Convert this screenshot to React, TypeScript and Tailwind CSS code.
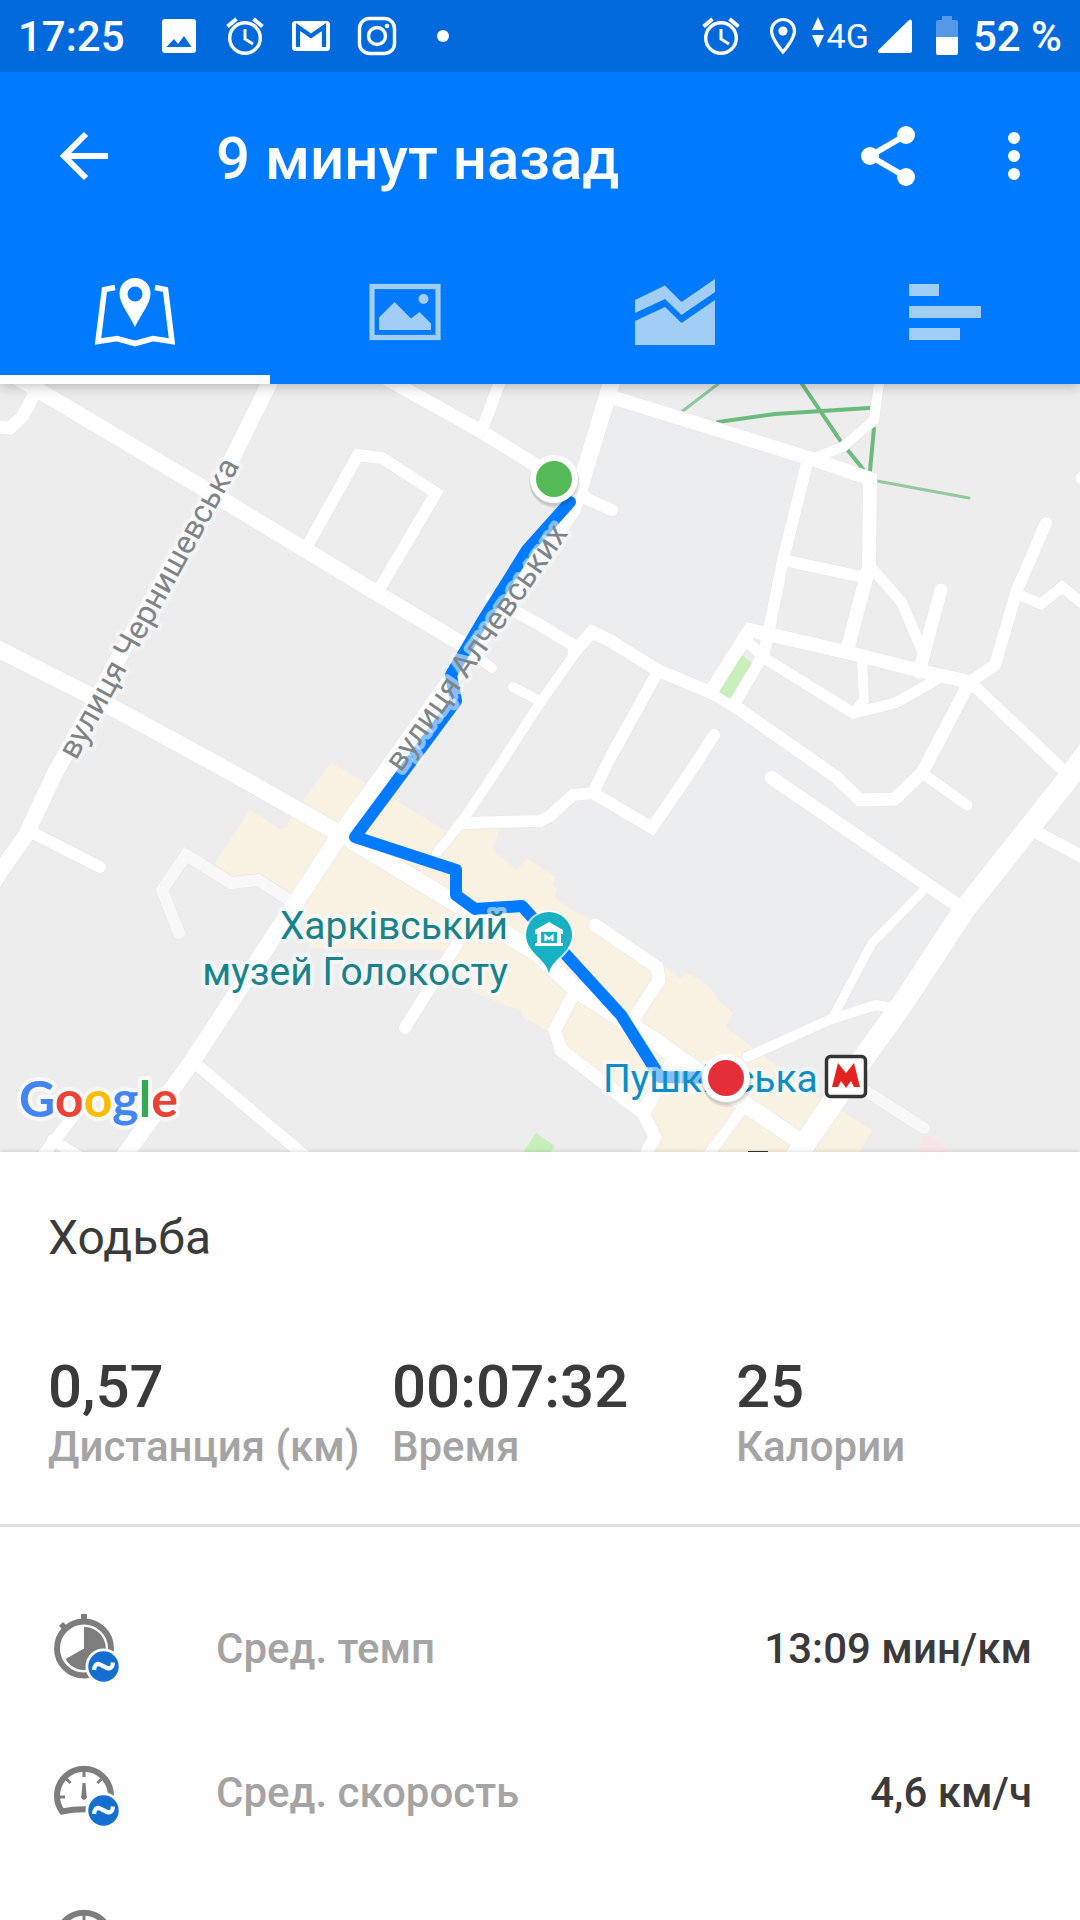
import { useState, type ReactNode } from 'react';

type Road = { points: string; width: number; dim?: boolean };

const roads: Road[] = [
  { points: '179,933 162,890 186,855 231,883 258,880 289,900', width: 12, dim: true },
  { points: '864,1090 924,1128', width: 12, dim: true },
  { points: '10,373 43,393 208,491 375,592 462,644 477,656', width: 16 },
  { points: '470,652 492,668', width: 10 },
  { points: '275,373 269,384 220,483 127,643 100,693 55,773 26,835 0,872 -12,892', width: 16 },
  { points: '-10,644 0,650 93,697 227,770 337,832 455,903 537,953 578,991 654,1040 705,1077 795,1138', width: 17 },
  { points: '616,370 611,384 580,487 572,510 473,649 382,777 341,833 193,1060 127,1152 120,1162', width: 17 },
  { points: '380,375 396,384 482,432 537,466 575,490 585,497', width: 14 },
  { points: '580,496 612,510', width: 12 },
  { points: '503,375 499,384 482,430', width: 12 },
  { points: '305,550 358,455 382,458 436,493 377,593', width: 12 },
  { points: '-8,427 10,428 22,417 34,395', width: 13 },
  { points: '492,598 513,610 540,625 578,648', width: 12 },
  { points: '574,652 592,632 609,640 657,670 712,693 736,707 836,777 860,800 895,799 922,773 967,687', width: 13 },
  { points: '576,652 540,703 492,777 465,817 437,853', width: 10 },
  { points: '513,687 536,699', width: 10 },
  { points: '461,823 540,821 550,816 573,795 593,793 652,828 695,765 714,735', width: 12 },
  { points: '593,793 609,760 657,673', width: 12 },
  { points: '606,395 611,397 812,459 870,479 869,567 848,647', width: 14 },
  { points: '880,375 879,384 874,420 843,447 814,458', width: 10 },
  { points: '807,463 783,560 769,630 764,653 735,703', width: 12 },
  { points: '783,560 867,578', width: 12 },
  { points: '712,690 750,630 850,653 929,673 970,682', width: 14 },
  { points: '743,637 764,658 853,713 895,703 936,680', width: 11 },
  { points: '862,660 864,700 853,713', width: 10 },
  { points: '871,567 902,603 922,650', width: 11 },
  { points: '941,590 919,672', width: 13 },
  { points: '970,682 995,665 1017,590 1046,523', width: 12 },
  { points: '1017,594 1041,604 1062,587 1090,609', width: 11 },
  { points: '970,682 1065,772', width: 12 },
  { points: '1100,735 1067,780 964,910 903,1003 860,1063 814,1130 790,1166', width: 22 },
  { points: '1036,832 1090,861', width: 13 },
  { points: '772,778 957,905', width: 14 },
  { points: '922,892 872,943 833,1017', width: 9 },
  { points: '747,1057 829,1020 876,1005 892,1008', width: 10 },
  { points: '922,773 967,805', width: 11 },
  { points: '595,925 657,967 659,980 635,1017', width: 13 },
  { points: '574,993 555,1030 561,1050 643,1113 655,1137 644,1158', width: 13 },
  { points: '646,1108 672,1062', width: 14 },
  { points: '743,1108 706,1158', width: 11 },
  { points: '196,1064 312,1162', width: 12 },
  { points: '78,1110 38,1162', width: 12 },
  { points: '52,1140 82,1158', width: 11 },
  { points: '31,832 100,867', width: 12 },
  { points: '457,944 405,1028', width: 12 },
  { points: '1095,474 1082,478', width: 13 }
];

const route =
  '570,502 527,550 482,622 451,675 456,701 355,837 456,870 456,895 475,909 522,906 568,957 621,1015 660,1077 726,1078';

const summary = [
  { label: 'Дистанция (км)', value: '0,57' },
  { label: 'Время', value: '00:07:32' },
  { label: 'Калории', value: '25' }
];

function AlarmIcon() {
  return (
    <svg viewBox="0 0 40 40" className="h-10 w-10" fill="none" stroke="currentColor">
      <circle cx="20" cy="22" r="15.3" strokeWidth="3.4" />
      <path d="M20 13v10l8 5" strokeWidth="3" />
      <path d="M2.500 10.500l9-7.500M37.500 10.500l-9-7.500" strokeWidth="4" />
    </svg>
  );
}

function StatusBar() {
  return (
    <div className="flex h-[72px] items-center justify-between bg-[#0069db] px-[18px] text-[42px] font-medium leading-[72px] text-white">
      <div className="flex items-center gap-[26px]">
        <span className="mr-2 pt-0.5">17:25</span>
        <svg viewBox="0 0 40 40" className="h-10 w-10">
          <path
            fill="currentColor"
            fillRule="evenodd"
            d="M6 3h28a3 3 0 0 1 3 3v28a3 3 0 0 1-3 3H6a3 3 0 0 1-3-3V6a3 3 0 0 1 3-3zM7.500 31h25l-7.500-11-6 8-4-5z"
          />
        </svg>
        <AlarmIcon />
        <svg viewBox="0 0 40 40" className="h-10 w-10">
          <rect x="1" y="5" width="38" height="30" rx="3.5" fill="currentColor" />
          <path d="M7 31V11l13 9 13-9v20" fill="none" stroke="#0069db" strokeWidth="4.2" />
        </svg>
        <svg viewBox="0 0 40 40" className="h-10 w-10" fill="none" stroke="currentColor">
          <rect x="2.5" y="2.5" width="35" height="35" rx="10" strokeWidth="3.4" />
          <circle cx="20" cy="20" r="8.5" strokeWidth="3.4" />
          <circle cx="30" cy="10" r="2.3" fill="currentColor" stroke="none" />
        </svg>
        <svg viewBox="0 0 40 40" className="h-10 w-10">
          <circle cx="20" cy="20" r="6" fill="currentColor" />
        </svg>
      </div>
      <div className="flex items-center">
        <AlarmIcon />
        <svg viewBox="0 0 28 40" className="ml-7 h-10 w-7">
          <path
            d="M14 3.500c-6.500 0-11.500 5-11.500 11.500C2.500 23 14 36 14 36s11.500-13 11.500-21C25.500 8.500 20.500 3.500 14 3.500z"
            fill="none"
            stroke="currentColor"
            strokeWidth="3.2"
          />
          <circle cx="14" cy="15" r="4.6" fill="currentColor" />
        </svg>
        <svg viewBox="0 0 14 40" className="ml-3.5 h-10 w-3.5">
          <path d="M7 1l6 13H1zM7 32l6-13H1z" fill="currentColor" />
        </svg>
        <span className="ml-0.5 text-[34px] font-normal">4G</span>
        <svg viewBox="0 0 36 40" className="ml-2 h-10 w-9">
          <path d="M35 6v29a2 2 0 0 1-2 2H3c-2 0-2.500-1.600-1.500-3L32 4c1.500-1.300 3-.5 3 2z" fill="currentColor" />
        </svg>
        <svg viewBox="0 0 24 40" className="ml-[22px] h-10 w-6">
          <path d="M7 0h10v4h4a2 2 0 0 1 2 2v15H1V6a2 2 0 0 1 2-2h4z" fill="#5599e6" />
          <path d="M1 21h22v16a2 2 0 0 1-2 2H3a2 2 0 0 1-2-2z" fill="currentColor" />
        </svg>
        <span className="ml-3.5 pt-0.5">52 %</span>
      </div>
    </div>
  );
}

const tabs: { id: string; label: string; icon: ReactNode }[] = [
  {
    id: 'map',
    label: 'Карта',
    icon: (
      <>
        <path
          d="M20 15.500L9.500 17.500 3 69.500 22 66.500 40 71.500 58 66.500 77 69.500 70.500 17.500 60 15.500"
          fill="none"
          stroke="currentColor"
          strokeWidth="5.6"
        />
        <path
          fillRule="evenodd"
          d="M40 6c-9 0-15.500 7-15.500 15.500 0 10 9 20 15.500 33.500 6.500-13.500 15.500-23.500 15.500-33.500C55.500 13 49 6 40 6zm0 8.500a7.500 7.500 0 1 1 0 15 7.500 7.500 0 0 1 0-15z"
          fill="currentColor"
        />
      </>
    )
  },
  {
    id: 'photos',
    label: 'Фото',
    icon: (
      <>
        <rect x="7" y="14.5" width="66" height="51" fill="none" stroke="currentColor" strokeWidth="5.2" />
        <path d="M14 58V45.500L29.500 30 46 46.500l8.500-6.500L66 51.500V58z" fill="currentColor" />
        <circle cx="58.5" cy="27" r="5" fill="currentColor" />
      </>
    )
  },
  {
    id: 'charts',
    label: 'Графики',
    icon: (
      <path
        d="M0 28l30-14.500 16.500 16.500L80 7v13L46.500 43 30 27 0 41zM0 49l30-14 16.500 16L80 28v45H0z"
        fill="currentColor"
      />
    )
  },
  {
    id: 'splits',
    label: 'Отрезки',
    icon: <path d="M4 12h30v12H4zM4 34h72v12H4zM4 56h51v12H4z" fill="currentColor" />
  }
];

function Header() {
  const [active, setActive] = useState('map');

  return (
    <header className="relative z-10 bg-[#007aff] text-white shadow-[0_2px_12px_rgba(0,0,0,0.25)]">
      <StatusBar />
      <div className="flex h-[168px] items-center pl-12 pr-[30px]">
        <a href="#back" aria-label="Назад">
          <svg viewBox="0 0 72 72" className="h-[72px] w-[72px]" fill="none" stroke="currentColor" strokeWidth="6">
            <path d="M60 36H15M38 14L16 36l22 22" />
          </svg>
        </a>
        <h1 className="ml-24 grow pt-1.5 text-[60px] font-medium leading-[72px]">9 минут назад</h1>
        <button type="button" aria-label="Поделиться">
          <svg viewBox="0 0 72 72" className="h-[72px] w-[72px]" fill="currentColor">
            <path d="M54 15L18 36l36 21" fill="none" stroke="currentColor" strokeWidth="6" />
            <circle cx="18" cy="36" r="9" />
            <circle cx="54" cy="15" r="9" />
            <circle cx="54" cy="57" r="9" />
          </svg>
        </button>
        <button type="button" aria-label="Меню" className="ml-[54px]">
          <svg viewBox="0 0 72 72" className="h-[72px] w-[72px]" fill="currentColor">
            <circle cx="36" cy="18" r="6" />
            <circle cx="36" cy="36" r="6" />
            <circle cx="36" cy="54" r="6" />
          </svg>
        </button>
      </div>
      <nav className="grid grid-cols-4">
        {tabs.map((tab) => (
          <button
            key={tab.id}
            type="button"
            aria-label={tab.label}
            onClick={() => setActive(tab.id)}
            className={
              active === tab.id
                ? 'flex h-36 items-center justify-center border-y-[9px] border-t-transparent border-b-white text-white'
                : 'flex h-36 items-center justify-center border-y-[9px] border-transparent text-[#a2cef6]'
            }
          >
            <svg viewBox="0 0 80 80" className="h-20 w-20">
              {tab.icon}
            </svg>
          </button>
        ))}
      </nav>
    </header>
  );
}

function RouteMarker({ x, y, color }: { x: number; y: number; color: string }) {
  return (
    <g>
      <circle cx={x + 1} cy={y + 4} r="25" fill="#000" opacity="0.08" />
      <circle cx={x} cy={y + 2} r="25" fill="#000" opacity="0.08" />
      <circle cx={x} cy={y} r="24" fill="#fff" />
      <circle cx={x} cy={y} r="18" fill={color} />
    </g>
  );
}

function RouteMap() {
  return (
    <svg viewBox="0 384 1080 768" className="block w-full shrink-0 bg-[#ededed]" role="img" aria-label="Маршрут">
      {/* districts and parks */}
      <path d="M612 402L802 462 765 640 712 690 592 632 540 620 575 515z" fill="#ebedee" />
      <path d="M575 800L652 828 712 735 740 712 860 800 957 903 888 1005 830 1018 745 1050 580 910 545 830z" fill="#ebedee" />
      <path
        d="M331 763L365 782 396 800 444 830 500 828 492 850 517 870 527 858 540 867 555 877 552 885 557 890 554 897 568 908 580 914 588 917 667 968 681 979 685 973 700 979 712 990 718 1000 733 1013 726 1027 754 1048 817 1097 840 1110 872 1130 860 1152 650 1152 655 1137 643 1113 561 1050 555 1035 523 1017 520 1009 510 1007 475 993 441 950 310 948 303 907 293 895 260 873 232 877 215 863 250 810 280 829 287 827 289 820z"
        fill="#f9f2e3"
      />
      <path d="M536 1133L555 1146 550 1153H523z" fill="#c8efbb" />
      <path d="M922 1136q14-2 26 17h-30z" fill="#f8e6e6" />

      <g fill="none" strokeLinecap="round">
        <path d="M680 413L718 384" stroke="#8ec79a" strokeWidth="3" />
        <path d="M718 422L775 414 869 408" stroke="#6bbb7c" strokeWidth="4" />
        <path d="M802 384L842 443 863 469" stroke="#6bbb7c" strokeWidth="4" />
        <path d="M874 428L870 471" stroke="#6bbb7c" strokeWidth="4" />
        <path d="M877 481L969 498" stroke="#93c99d" strokeWidth="3" />
      </g>

      <g fill="none" strokeLinecap="round" strokeLinejoin="miter">
        {roads.map((road) => (
          <polyline key={`c${road.points}`} points={road.points} stroke="#e4e5e6" strokeWidth={road.width + 1} />
        ))}
        {roads.map((road) => (
          <polyline
            key={road.points}
            points={road.points}
            stroke={road.dim ? '#f8f8f8' : '#fff'}
            strokeWidth={road.width}
          />
        ))}
      </g>
      <path d="M742 655L752 663 730 699 719 692z" fill="#c8efbb" />

      <polyline points={route} fill="none" stroke="#007aff" strokeWidth="12" strokeLinecap="round" strokeLinejoin="round" />

      <g strokeLinejoin="round" className="[paint-order:stroke]" stroke="rgba(247,250,252,0.55)" strokeWidth="8">
        <g fill="#7f8486" fontSize="32">
          <text transform="translate(76 761) rotate(-61)">вулиця Чернишевська</text>
          <text transform="translate(401 773) rotate(-55)">вулиця Алчевських</text>
        </g>
        <g fill="#1a828a" fontSize="39" textAnchor="end">
          <text x="508" y="939">Харківський</text>
          <text x="508" y="985">музей Голокосту</text>
        </g>
        <text x="603" y="1092" fill="#0b8ec4" fontSize="39">
          Пушкінська
        </text>
        <text x="19" y="1117" fontSize="50" className="font-[Lato] font-bold" stroke="rgba(250,250,250,0.8)">
          <tspan fill="#4285f4">G</tspan>
          <tspan fill="#ea4335">o</tspan>
          <tspan fill="#fbbc05">o</tspan>
          <tspan fill="#4285f4">g</tspan>
          <tspan fill="#34a853">l</tspan>
          <tspan fill="#ea4335">e</tspan>
        </text>
      </g>

      {/* museum pin */}
      <path
        d="M549 974c-2-15-23-21-23-39a23 23 0 0 1 46 0c0 18-21 24-23 39z"
        fill="#18b1c4"
        stroke="#fff"
        strokeOpacity="0.75"
        strokeWidth="4"
        className="[paint-order:stroke]"
      />
      <path d="M549 922l14 8v4h-2v9h2v3h-28v-3h2v-9h-2v-4zM541 932v11h16v-11z" fill="#fff" fillRule="evenodd" />
      <path d="M545.500 941v-5l3.500 3 3.500-3v5" fill="none" stroke="#fff" strokeWidth="2.2" />

      {/* metro badge */}
      <rect x="826.5" y="1056.5" width="39" height="40" rx="4" fill="#fff" stroke="#343434" strokeWidth="3.5" />
      <path d="M832 1087l6-24 8 10 8-10 6 24h-6l-3-6-5 7-5-7-3 6z" fill="#e42320" />
      <path d="M748 1151h20v2h-20z" fill="#343434" />

      <RouteMarker x={554} y={479} color="#56b957" />
      <RouteMarker x={726} y={1078} color="#e42f39" />
    </svg>
  );
}

function AverageBadge() {
  return (
    <>
      <circle cx="55.5" cy="53.5" r="18" fill="#fefefe" />
      <circle cx="55.5" cy="53.5" r="15.2" fill="#156fd1" />
      <path
        d="M46 57c.3-5 3-7 6-5.500l7 3.500c3 1.300 5.700-.5 6-5.500"
        fill="none"
        stroke="#fff"
        strokeWidth="4.2"
      />
    </>
  );
}

function PaceIcon() {
  return (
    <svg viewBox="0 0 72 72" className="h-[72px] w-[72px]">
      <path d="M33 1h6v7h-6zM11 13l4-4 4 4-4 4z" fill="#7d7d7d" />
      <circle cx="36" cy="35.5" r="27" fill="none" stroke="#7d7d7d" strokeWidth="6" />
      <path d="M36 35.500v-21.500a21.500 21.500 0 1 1-18.500 32z" fill="#7d7d7d" />
      <AverageBadge />
    </svg>
  );
}

function SpeedIcon({ badge = true }: { badge?: boolean }) {
  return (
    <svg viewBox="0 0 72 72" className="h-[72px] w-[72px]">
      <g fill="none" stroke="#7d7d7d">
        <path d="M14 54.500A27 27 0 1 1 58 54.500Q36 50 14 54.500z" strokeWidth="6" />
        <path d="M36 14v6M18.500 22l4 4M53.500 22l-4 4M11 40h6M55 40h6" strokeWidth="3" />
      </g>
      <path d="M34.500 26h3l1 12a3 3 0 1 1-5 0z" fill="#7d7d7d" />
      {badge ? <AverageBadge /> : null}
    </svg>
  );
}

function StatRow({ icon, label, value }: { icon: ReactNode; label?: string; value?: string }) {
  return (
    <li className="flex h-36 shrink-0 items-center px-12">
      {icon}
      <span className="ml-24 grow text-[#a4a4a4]">{label}</span>
      <span>{value}</span>
    </li>
  );
}

export default function App() {
  return (
    <div className="flex h-screen flex-col overflow-hidden bg-[#fefefe] font-[Roboto,sans-serif] text-[#3a3a3a]">
      <Header />
      <RouteMap />
      <main className="relative min-h-0 grow overflow-hidden shadow-[0_-1px_4px_rgba(0,0,0,0.12)]">
        <section className="border-b-[3px] border-[#dfdfdf] px-12 pb-[53px] pt-[58px]">
          <h2 className="text-[48px] leading-[56px]">Ходьба</h2>
          <dl className="mt-[85px] grid grid-cols-[344fr_344fr_296fr]">
            {summary.map((item) => (
              <div key={item.label} className="flex flex-col-reverse font-medium">
                <dt className="whitespace-nowrap text-[42px] leading-[48px] text-[#a4a4a4]">{item.label}</dt>
                <dd className="text-[60px] leading-[72px]">{item.value}</dd>
              </div>
            ))}
          </dl>
        </section>
        <ul className="flex flex-col pt-[50px] text-[42px] font-medium leading-[50px]">
          <StatRow icon={<PaceIcon />} label="Сред. темп" value="13:09 мин/км" />
          <StatRow icon={<SpeedIcon />} label="Сред. скорость" value="4,6 км/ч" />
          <StatRow icon={<SpeedIcon badge={false} />} />
        </ul>
      </main>
    </div>
  );
}
